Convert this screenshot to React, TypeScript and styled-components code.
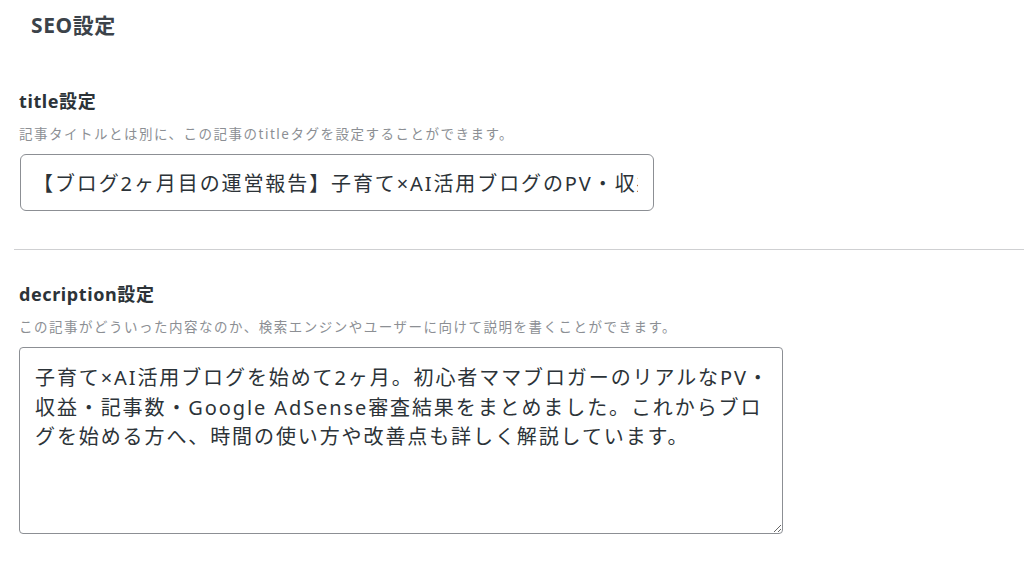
import React, { FC } from "react";
import styled, { createGlobalStyle } from "styled-components";

const GlobalStyle = createGlobalStyle`
  html, body {
    margin: 0;
    padding: 0;
    background: #ffffff;
  }
  body {
    font-family: "Noto Sans", "Noto Sans CJK JP", sans-serif;
    color: #1e1e1e;
  }
`;

interface iFieldProps {
  label: string;
  help: string;
  first?: boolean;
  children?: React.ReactNode;
}

const Field: FC<iFieldProps> = ({ label, help, first, children }) => {
  return (
    <FieldHolder $first={first}>
      <FieldLabel>{label}</FieldLabel>
      <FieldHelp>{help}</FieldHelp>
      {children}
    </FieldHolder>
  );
};

const App = () => {
  return (
    <Page>
      <GlobalStyle />
      <Heading>SEO設定</Heading>

      <Field
        first
        label="title設定"
        help="記事タイトルとは別に、この記事のtitleタグを設定することができます。"
      >
        <InputFrame>
          <TitleInput
            type="text"
            defaultValue="【ブログ2ヶ月目の運営報告】子育て×AI活用ブログのPV・収益・記事数を公開！"
          />
        </InputFrame>
      </Field>

      <Divider />

      <Field
        label="decription設定"
        help="この記事がどういった内容なのか、検索エンジンやユーザーに向けて説明を書くことができます。"
      >
        <DescArea defaultValue="子育て×AI活用ブログを始めて2ヶ月。初心者ママブロガーのリアルなPV・収益・記事数・Google AdSense審査結果をまとめました。これからブログを始める方へ、時間の使い方や改善点も詳しく解説しています。" />
      </Field>
    </Page>
  );
};

export default App;

const Page = styled.div`
  width: 1024px;
  height: 569px;
  overflow: hidden;
  box-sizing: border-box;
  padding-top: 11px;
`;

const Heading = styled.h2`
  margin: 0 0 0 31px;
  font-size: 21px;
  line-height: 28px;
  font-weight: 700;
  letter-spacing: 0.6px;
  color: #3c434a;
`;

const FieldHolder = styled.div<{ $first?: boolean }>`
  display: flex;
  flex-direction: column;
  padding: 0 0 0 19px;
  margin-top: ${(p) => (p.$first ? "51px" : "0")};
`;

const FieldLabel = styled.div`
  font-size: 18px;
  line-height: 22px;
  font-weight: 700;
  letter-spacing: 0.6px;
  color: #2c3338;
`;

const FieldHelp = styled.p`
  margin: 13px 0 11px;
  font-size: 13.5px;
  line-height: 18px;
  letter-spacing: 1.5px;
  color: #8c8f94;
  white-space: nowrap;
`;

const InputFrame = styled.div`
  box-sizing: border-box;
  display: flex;
  align-items: center;
  width: 634px;
  height: 57px;
  margin-left: 1px;
  padding: 0 15px 0 12px;
  border: 1px solid #8c8f94;
  border-radius: 6px;
  background: #fff;
`;

const TitleInput = styled.input`
  flex: 1;
  min-width: 0;
  height: 100%;
  padding: 0;
  border: 0;
  outline: none;
  font-family: "Noto Sans", "Noto Sans CJK JP", sans-serif;
  font-size: 20px;
  letter-spacing: 1.9px;
  color: #2c3338;
  background: transparent;
`;

const Divider = styled.hr`
  margin: 38px 0 33px 14px;
  border: 0;
  border-top: 1px solid #cfd0d2;
  height: 0;
`;

const DescArea = styled.textarea`
  box-sizing: border-box;
  width: 764px;
  height: 187px;
  padding: 15px 5px 10px 15px;
  border: 1px solid #8c8f94;
  border-radius: 4px;
  outline: none;
  resize: both;
  font-family: "Noto Sans", "Noto Sans CJK JP", sans-serif;
  font-size: 20px;
  line-height: 29.5px;
  letter-spacing: 1.9px;
  color: #2c3338;
  background: #fff;
`;
